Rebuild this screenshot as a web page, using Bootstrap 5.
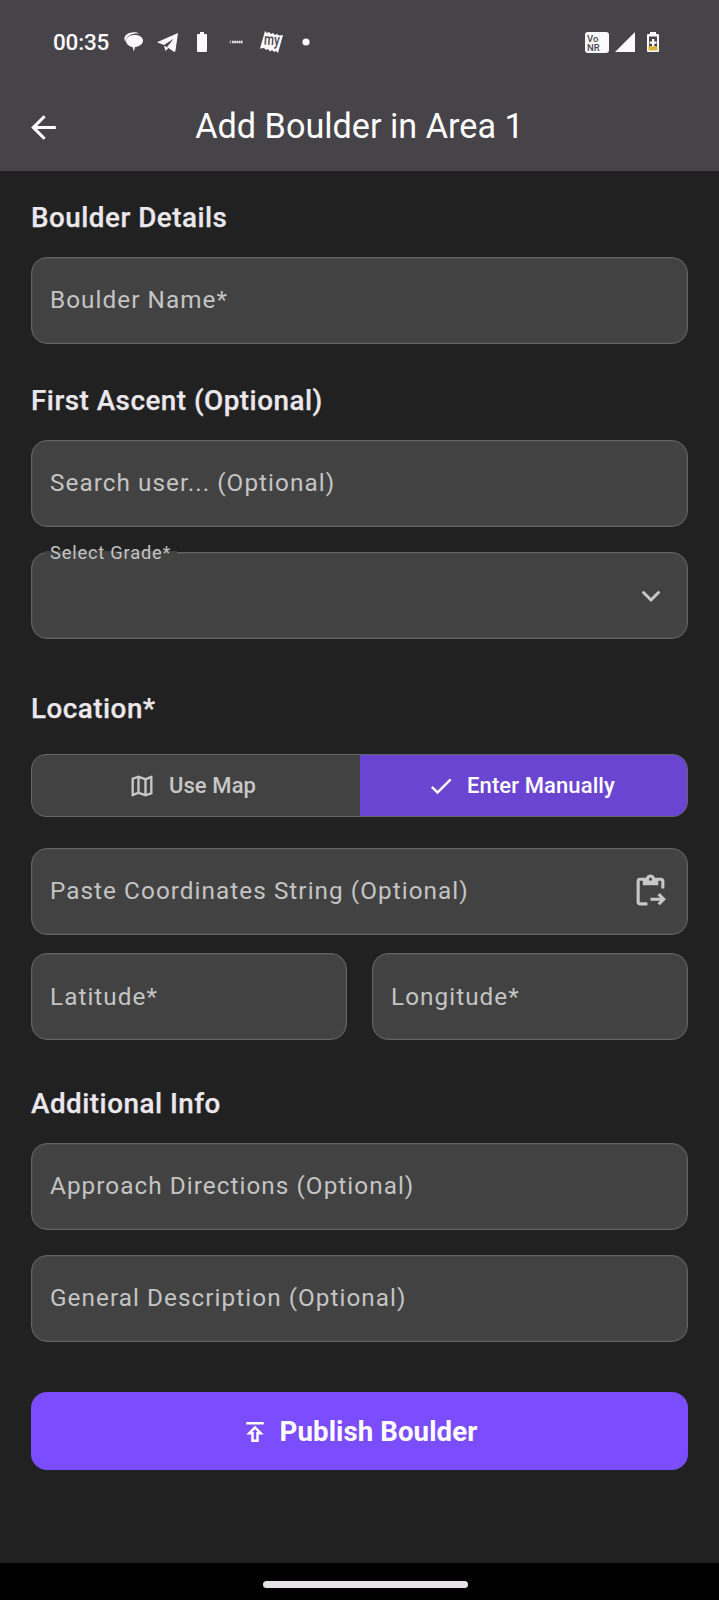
<!DOCTYPE html>
<html lang="en" data-bs-theme="dark">
<head>
<meta charset="utf-8">
<meta name="viewport" content="width=device-width, initial-scale=1">
<title>Add Boulder in Area 1</title>
<link href="https://cdn.jsdelivr.net/npm/bootstrap@5.3.0/dist/css/bootstrap.min.css" rel="stylesheet">
<style>
  body { background: #212121; color: #e8e4ea; font-family: Roboto, "Liberation Sans", sans-serif; }
  svg { display: block; flex: none; overflow: visible; }
  .app-screen { height: 1600px; overflow: hidden; }
  .top-area { background: #464449; height: 171px; color: #fff; }
  .status-bar { height: 84px; padding-left: 53px; padding-right: 60px; }
  .clock { font-size: 22.5px; font-weight: 500; line-height: 1; letter-spacing: -.2px; color: #fdfaff; width: 71px; padding-top: 1px; }
  .title-bar { height: 86px; padding: 0 25px; }
  .page-title { font-size: 34.2px; line-height: 1; padding-bottom: 2px; }
  .side-slot { width: 37px; }
  .form-area { padding: 0 31px; }
  .section-title { font-size: 27.8px; font-weight: 500; line-height: 32px; letter-spacing: .5px; margin: 0; color: #ebe7ed; -webkit-text-stroke: .25px #ebe7ed; }
  .field-box { position: relative; height: 87px; border: 1px solid #636364; box-shadow: inset 0 0 0 1px #4a4a4a; border-radius: 16px; background: #424242; color: #c4c4c4; padding: 0 18px; font-size: 24.3px; letter-spacing: 1.05px; line-height: 1; }
  .float-label { position: absolute; left: 13px; top: -9px; padding: 0 6px 0 5px; font-size: 18.3px; line-height: 18px; letter-spacing: .8px; }
  .float-label::before { content: ""; position: absolute; left: 0; right: 0; top: 7px; height: 4px; background: #424242; z-index: -1; }
  .field-box.with-label { z-index: 0; }
  .toggle-group { height: 63px; border: 1px solid #68666b; border-radius: 15px; overflow: hidden; background: #424242; }
  .toggle-item { border-radius: 0; border: 0; padding: 0 7px 0 0; font-size: 22px; font-weight: 500; letter-spacing: .1px; line-height: 1; color: #c8c8c8; gap: 12.5px; }
  .toggle-item.chosen { background: #6a45d1; color: #fff; padding-right: 5px; }
  .coord-row { gap: 25px; }
  .publish { height: 78px; border: 0; border-radius: 16px; background: #7c4dff; color: #fff; font-size: 27.6px; font-weight: 700; line-height: 1; letter-spacing: .1px; gap: 10px; padding: 1px 2px 0 0; }
  .nav-strip { height: 37px; background: #000; padding-top: 18px; }
  .home-pill { width: 205px; height: 7px; border-radius: 4px; background: #e6e2e8; }
</style>
</head>
<body>
<div class="app-screen d-flex flex-column">
  <header class="top-area flex-shrink-0">
    <div class="status-bar d-flex align-items-center">
      <span class="clock">00:35</span>
      <svg width="19" height="20" viewBox="0 0 19 20" fill="#fdfaff"><path d="M10.500 3C15.200 3 19 5 19 8.600c0 3.300-3.200 6-7.900 6.500L9.800 19.500 8.800 15.200C4.500 14.500 2 11.500 2 8.600 2 5.500 5.500 3 10.500 3z"/><path d="M1.300 10C-1.300 5 2 .9 8.500.4c2.500-.2 5.200.3 6.500 1.200C8 1.200 2.200 3.500 1.300 10z"/></svg>
      <svg style="margin-left:14px" width="21" height="19" viewBox="0 0 21 19" fill="#fdfaff"><path d="M0 9.300 21 0 18.500 17.600c-.2 1.200-1 1.500-2 .9L10 14l6.700-8.200L7 12z"/><path d="M7 12.500 8.500 18l3-3z"/></svg>
      <svg style="margin-left:19px" width="10" height="20" viewBox="0 0 10 20" fill="#fdfaff"><path d="M3 0h4v2h2q1 0 1 1v16q0 1-1 1H1q-1 0-1-1V3q0-1 1-1h2z"/></svg>
      <svg style="margin-left:22px" width="14" height="4" viewBox="0 0 14 4" fill="none" stroke="#e8e4ea"><path d="M1.800.5Q0 1.700 1.800 3.200"/><path d="M3 2h11" stroke-width="2.600" stroke-dasharray="1.800 .4"/></svg>
      <svg style="margin-left:17px" width="23" height="22" viewBox="0 0 23 22"><path fill="#fdfaff" d="M5 0l2 2 2-1 2 2 2-1 2 2 2-1 2 1.500 4-.5-5 18-2-2-2 1-2-2-2 1.500L8 18l-2 1-2-2-4 .5z"/><text x="4" y="14" font-family="Roboto, sans-serif" font-size="16" font-weight="500" textLength="15.500" lengthAdjust="spacingAndGlyphs" fill="#464449" transform="rotate(4 11 11)">my</text></svg>
      <svg style="margin-left:19px" width="8" height="8" viewBox="0 0 8 8"><circle cx="4" cy="4" r="3.600" fill="#fdfaff"/></svg>
      <svg class="ms-auto" width="24" height="21" viewBox="0 0 24 21"><rect width="24" height="21" rx="3" fill="#fdfaff"/><g font-family="Roboto, sans-serif" font-size="9.500" font-weight="500" fill="#464449"><text x="2" y="9.500">Vo</text><text x="2" y="18.500">NR</text></g></svg>
      <svg style="margin-left:6px" width="20" height="20" viewBox="0 0 20 20"><path d="M20 0v20H0z" fill="#fdfaff"/></svg>
      <svg style="margin-left:12px" width="12" height="20" viewBox="0 0 12 20"><path d="M3 0h6v2h2q1 0 1 1v16q0 1-1 1H1q-1 0-1-1V3q0-1 1-1h2z" fill="#fdfaff"/><path d="M1.500 13.500h9v5h-9z" fill="#d8b43c"/><path d="M2 4.500h8v9.500H2z" fill="#464449"/><path d="M5 7h2.300v2.500H9.500v2.300H7.300v2.700H5v-2.700H2.700V9.500H5z" fill="#fdfaff"/></svg>
    </div>
    <div class="title-bar d-flex align-items-center justify-content-between">
      <svg class="side-slot" width="37" height="37" viewBox="0 0 24 24" fill="#fff"><path d="M20 11H7.830l5.590-5.590L12 4l-8 8 8 8 1.410-1.410L7.830 13H20v-2z"/></svg>
      <h1 class="page-title fw-normal mb-0">Add Boulder in Area 1</h1>
      <span class="side-slot"></span>
    </div>
  </header>

  <main class="form-area flex-grow-1">
    <h2 class="section-title" style="padding-top:31px">Boulder Details</h2>
    <div class="field-box d-flex align-items-center" style="margin-top:23px">Boulder Name*</div>

    <h2 class="section-title" style="margin-top:41px">First Ascent (Optional)</h2>
    <div class="field-box d-flex align-items-center" style="margin-top:23px">Search user... (Optional)</div>
    <div class="field-box with-label d-flex align-items-center justify-content-end" style="margin-top:25px">
      <span class="float-label">Select Grade*</span>
      <svg width="36" height="36" viewBox="0 0 36 36" fill="none" stroke="#c8c8c8" stroke-width="3" stroke-linecap="round"><path d="m10.500 14.500 7.500 7.500 7.500-7.500"/></svg>
    </div>

    <h2 class="section-title" style="margin-top:54px">Location*</h2>
    <div class="toggle-group d-flex" style="margin-top:29px">
      <button type="button" class="toggle-item btn w-50 d-flex align-items-center justify-content-center">
        <svg width="28" height="28" viewBox="0 0 24 24" fill="currentColor"><path d="M20.500 3l-.16.030L15 5.100 9 3 3.360 4.900c-.21.070-.36.250-.36.480V20.500c0 .28.220.5.500.5l.16-.030L9 18.900l6 2.100 5.640-1.900c.21-.070.360-.250.360-.480V3.500c0-.280-.220-.5-.5-.5zM10 5.470l4 1.400v11.660l-4-1.400V5.470zm-5 .990l3-1.010v11.700l-3 1.160V6.460zm14 11.080l-3 1.010V6.860l3-1.160v11.840z"/></svg>
        <span>Use Map</span>
      </button>
      <button type="button" class="toggle-item chosen btn w-50 d-flex align-items-center justify-content-center">
        <svg width="28" height="28" viewBox="0 0 24 24" fill="currentColor"><path d="M9 16.170L4.830 12l-1.420 1.410L9 19 21 7l-1.410-1.410z"/></svg>
        <span>Enter Manually</span>
      </button>
    </div>

    <div class="field-box d-flex align-items-center justify-content-between" style="margin-top:31px">
      <span>Paste Coordinates String (Optional)</span>
      <svg width="37" height="37" viewBox="0 0 24 24" fill="#c8c8c8"><path d="M5 5h2v3h10V5h2v5h2V5c0-1.100-.9-2-2-2h-4.180C14.400 1.840 13.300 1 12 1s-2.400.84-2.820 2H5c-1.100 0-2 .9-2 2v14c0 1.100.9 2 2 2h5v-2H5V5zm7-2c.55 0 1 .45 1 1s-.45 1-1 1-1-.45-1-1 .45-1 1-1z"/><path d="M18.010 13l-1.420 1.410 1.580 1.580H12v2h6.170l-1.580 1.590 1.420 1.410 3.990-4z"/></svg>
    </div>
    <div class="coord-row d-flex" style="margin-top:18px">
      <div class="field-box d-flex align-items-center w-50" style="padding-top:2px">Latitude*</div>
      <div class="field-box d-flex align-items-center w-50" style="padding-top:2px">Longitude*</div>
    </div>

    <h2 class="section-title" style="margin-top:48px">Additional Info</h2>
    <div class="field-box d-flex align-items-center" style="margin-top:23px">Approach Directions (Optional)</div>
    <div class="field-box d-flex align-items-center" style="margin-top:25px">General Description (Optional)</div>

    <button type="button" class="publish btn w-100 d-flex align-items-center justify-content-center" style="margin-top:50px">
      <svg width="30" height="30" viewBox="0 0 24 24" fill="currentColor"><path d="M5 4h14v2H5zm0 10h4v6h6v-6h4l-7-7-7 7zm8-2v6h-2v-6H9.830L12 9.830 14.170 12H13z"/></svg>
      <span>Publish Boulder</span>
    </button>
  </main>

  <footer class="nav-strip flex-shrink-0 d-flex justify-content-center"><div class="home-pill" style="margin-left:12px"></div></footer>
</div>
<script src="https://cdn.jsdelivr.net/npm/bootstrap@5.3.0/dist/js/bootstrap.bundle.min.js"></script>
</body>
</html>
